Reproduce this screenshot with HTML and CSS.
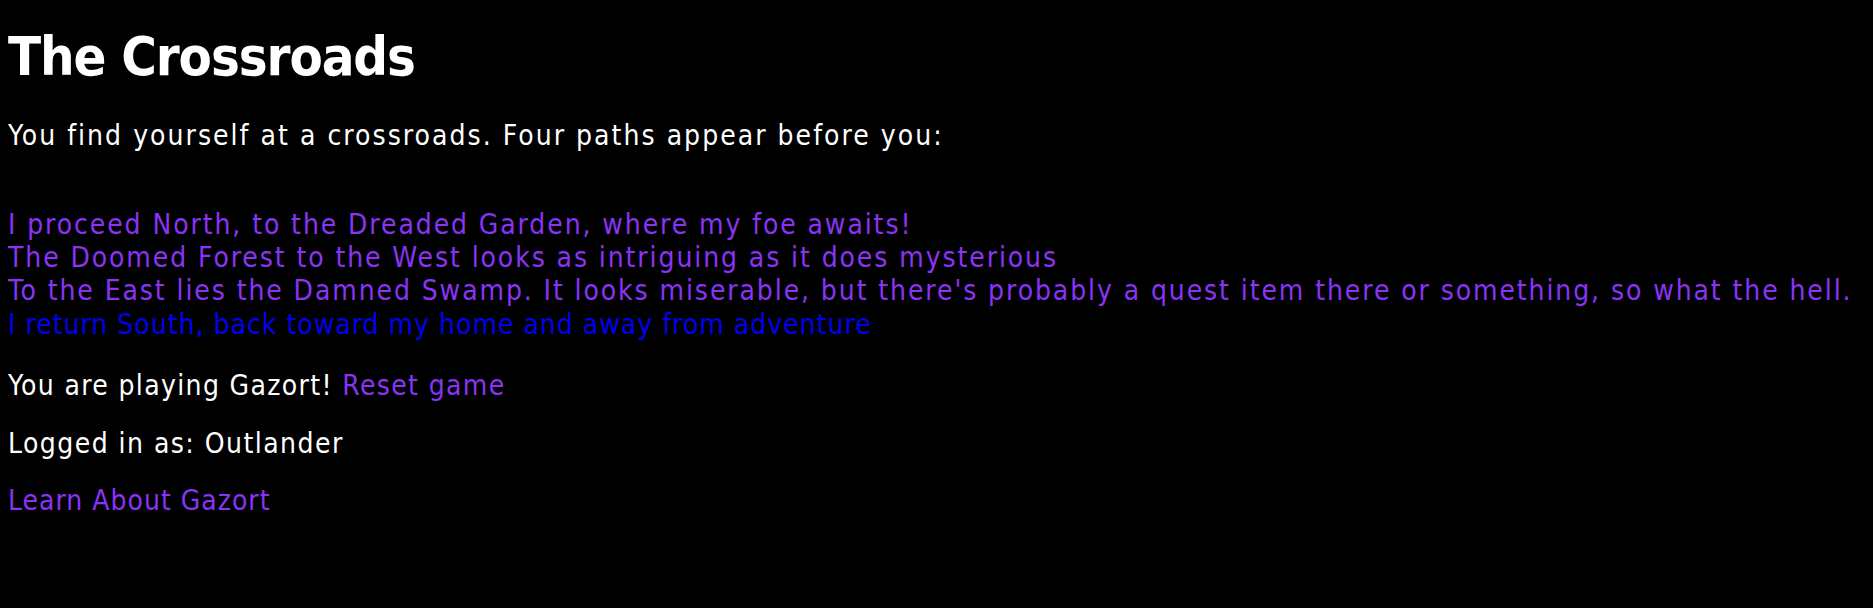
FILE: index.html
```html
<!DOCTYPE html>
<html>
<head>
<meta charset="utf-8">
<title>The Crossroads</title>
<link rel="stylesheet" href="styles.css">
</head>
<body>
<h1 class="title">The Crossroads</h1>
<p class="intro">You find yourself at a crossroads. Four paths appear before you:</p>
<div class="choices">
  <a class="choice visited" href="#north">I proceed North, to the Dreaded Garden, where my foe awaits!</a>
  <a class="choice visited" href="#west">The Doomed Forest to the West looks as intriguing as it does mysterious</a>
  <a class="choice visited" href="#east">To the East lies the Damned Swamp. It looks miserable, but there's probably a quest item there or something, so what the hell.</a>
  <a class="choice fresh" href="#south">I return South, back toward my home and away from adventure</a>
</div>
<p class="line status">You are playing Gazort! <a class="link visited" href="#reset">Reset game</a></p>
<p class="line user">Logged in as: Outlander</p>
<p class="line about"><a class="link visited" href="#about">Learn About Gazort</a></p>
</body>
</html>
```
FILE: styles.css
```css
html, body {
  background: #000;
}
body {
  margin: 8px;
  color: #fff;
  font-family: "DejaVu Sans", sans-serif;
  font-stretch: condensed;
  font-size: 28px;
  line-height: 33.3px;
  letter-spacing: 1.9px;
}
.title {
  margin: 17px 0 0 0;
  font-size: 54px;
  line-height: 64px;
  font-weight: bold;
  letter-spacing: -1.1px;
}
.intro {
  margin: 29.5px 0 0 0;
  letter-spacing: 2.03px;
}
.choices {
  margin-top: 56px;
  display: flex;
  flex-direction: column;
}
.choice {
  text-decoration: none;
  white-space: nowrap;
}
.visited { color: #8a33f5; }
.fresh {
  color: #0000ee;
  letter-spacing: 1px;
}
.link { text-decoration: none; }
.line {
  margin: 0;
}
.status {
  margin-top: 28px;
  letter-spacing: 1.35px;
}
.user {
  margin-top: 25px;
  letter-spacing: 1.45px;
}
.about {
  margin-top: 23px;
  letter-spacing: 1px;
}
```
